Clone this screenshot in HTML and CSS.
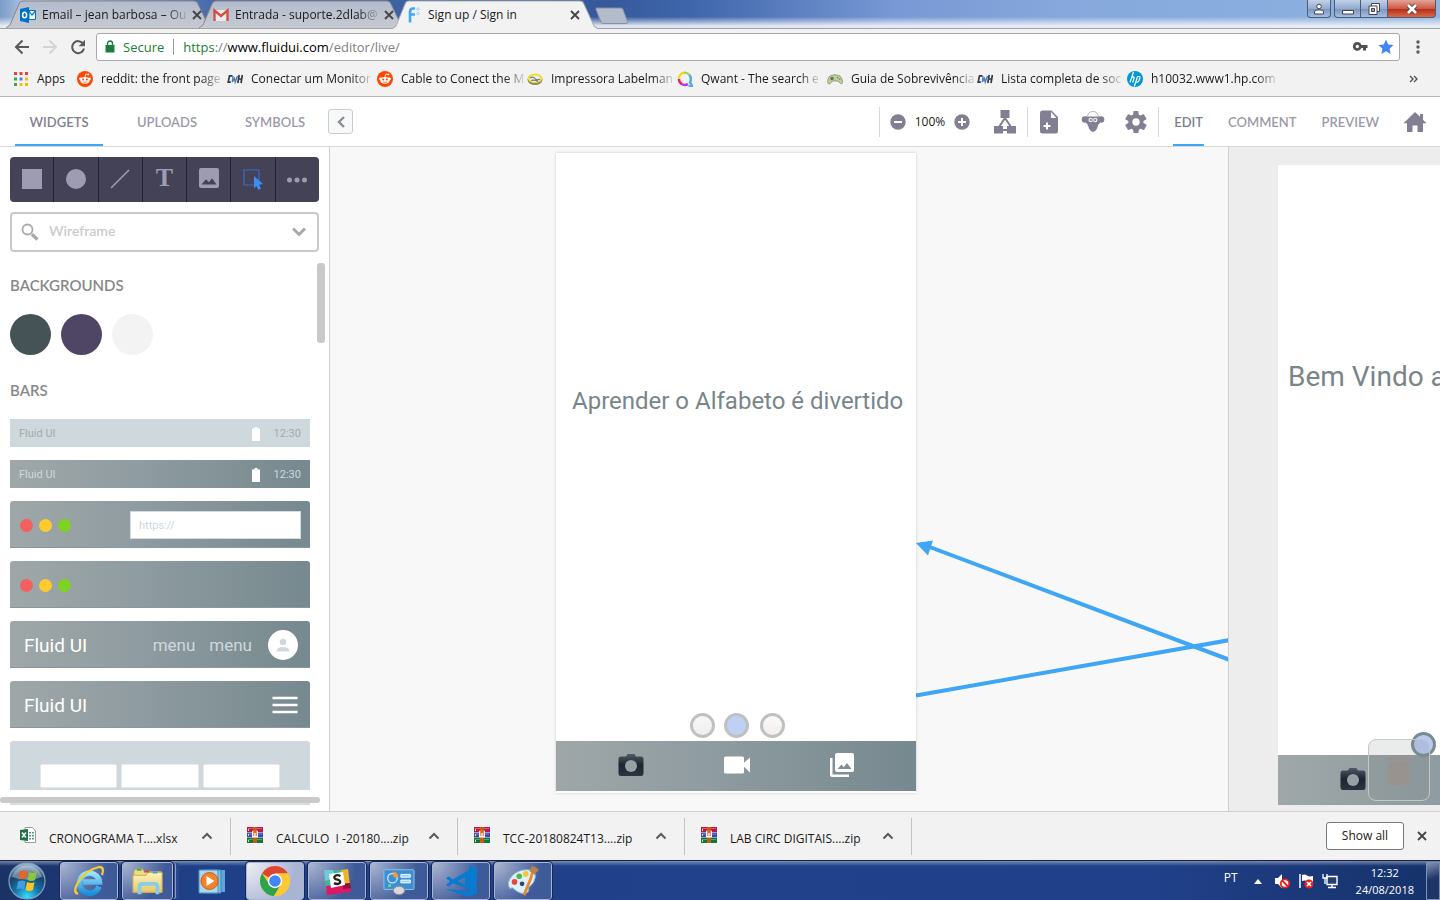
FILE: index.html
```html
<!DOCTYPE html>
<html lang="pt">
<head>
<meta charset="utf-8">
<title>Sign up / Sign in</title>
<link rel="stylesheet" href="styles.css">
</head>
<body>
<svg class="defs" aria-hidden="true">
  <defs>
    <linearGradient id="g-tab" x1="0" y1="0" x2="0" y2="1"><stop offset="0" stop-color="#b3bbcd"/><stop offset="1" stop-color="#c6cad1"/></linearGradient>
    <linearGradient id="g-ink" x1="0" y1="0" x2="0" y2="1"><stop offset="0" stop-color="#4e5a66"/><stop offset=".5" stop-color="#1c2530"/><stop offset="1" stop-color="#2b3440"/></linearGradient>
    <radialGradient id="g-orb" cx=".5" cy=".95" r=".9"><stop offset="0" stop-color="#35e0ff"/><stop offset=".4" stop-color="#1673a8"/><stop offset=".75" stop-color="#1c3f66"/><stop offset="1" stop-color="#8fb0cc"/></radialGradient>
    <linearGradient id="g-folder" x1="0" y1="0" x2="0" y2="1"><stop offset="0" stop-color="#fdf3bd"/><stop offset="1" stop-color="#e8c967"/></linearGradient>
    <linearGradient id="g-ie" x1="0" y1="0" x2="0" y2="1"><stop offset="0" stop-color="#9be4fb"/><stop offset="1" stop-color="#1c8fdc"/></linearGradient>
    <symbol id="tab" viewBox="0 0 206 28" preserveAspectRatio="none"><path d="M0 28L4 25 13 4Q14 1 17 1H188Q191 1 192 4L202 25 206 28"/></symbol>
    <symbol id="x" viewBox="0 0 10 10"><path d="M1 1l8 8M9 1L1 9" fill="none" stroke="currentColor" stroke-width="1.800"/></symbol>
    <symbol id="up" viewBox="0 0 12 8"><path d="M1.500 6.500L6 2l4.500 4.500" fill="none" stroke="currentColor" stroke-width="2"/></symbol>
    <symbol id="reddit" viewBox="0 0 16 16"><circle cx="8" cy="8" r="8" fill="#ff4500"/><circle cx="3.500" cy="7.800" r="1.400" fill="#fff"/><circle cx="12.500" cy="7.800" r="1.400" fill="#fff"/><ellipse cx="8" cy="9.300" rx="4.700" ry="3.400" fill="#fff"/><path d="M8 6l.8-3 2.400.5" fill="none" stroke="#fff" stroke-width=".8"/><circle cx="11.300" cy="3.600" r="1" fill="#fff"/><circle cx="6.200" cy="8.600" r="1" fill="#ff4500"/><circle cx="9.800" cy="8.600" r="1" fill="#ff4500"/><path d="M6 10.800q2 1.200 4 0" fill="none" stroke="#ff4500" stroke-width=".7"/></symbol>
    <symbol id="cwh" viewBox="0 0 16 16"><g fill="none" stroke="#333b44" stroke-width="1.700"><path d="M5.500 4.800H2.500L1.200 11.200h2.600"/><path d="M12.200 4L10.800 12M15.400 4L14 12M11.400 8h3.200"/></g><path d="M6 5l-.6 6 2-3.500.8 3.500 2.300-6" fill="none" stroke="#4d7fb8" stroke-width="1.400"/></symbol>
    <symbol id="rar" viewBox="0 0 16 16"><path fill="#b8174d" d="M0 0h16v5H0z"/><path fill="#3f48b0" d="M0 5.500h16v5H0z"/><path fill="#14753b" d="M0 11h16v5H0z"/><path fill="#e4527e" d="M1 1h14v1H1z"/><path fill="#7b84dd" d="M1 6.500h14v1H1z"/><path fill="#3fae6c" d="M1 12h14v1H1z"/><path fill="#f3d95a" d="M1 2h1v2H1zM1 7h1v2H1zM1 13h1v2H1z"/><path fill="#c85a12" d="M6 0h4v5H6zM6 11h4v5H6z"/><path fill="#e2611c" d="M5 3h6v8H5z"/><path fill="#fff" d="M5 4h1.300v5h1V6h1.400v3h1V4H11v6.500H5z"/></symbol>
    <symbol id="camera" viewBox="0 0 26 24"><path fill="url(#g-ink)" d="M8 3.500L9.500 1h7L18 3.500h5Q25.500 3.500 25.500 6v14.500Q25.500 23 23 23H3Q.5 23 .5 20.500V6Q.5 3.500 3 3.500z"/><circle cx="13" cy="13" r="6" fill="#96a0a3"/></symbol>
  </defs>
</svg>

<header class="titlebar">
  <div class="tabs">
    <div class="tab">
      <svg class="tab-shape"><use href="#tab"/></svg>
      <svg class="i16" viewBox="0 0 16 16"><path fill="#0072c6" d="M0 2l9-2v16l-9-2z"/><path fill="#fff" stroke="#0072c6" d="M9 3.500h6.500v9H9z"/><path d="M9 4l3 4 3.500-4" fill="none" stroke="#0072c6" stroke-width="1.200"/><ellipse cx="4.600" cy="8" rx="2" ry="2.800" fill="none" stroke="#fff" stroke-width="1.500"/></svg>
      <span class="tab-title fade">Email – jean barbosa – Ou</span>
      <button class="close" aria-label="Close tab"><svg><use href="#x"/></svg></button>
    </div>
    <div class="tab">
      <svg class="tab-shape"><use href="#tab"/></svg>
      <svg class="i16" viewBox="0 0 16 16"><path fill="#e8eaed" d="M1 3h14v11H1z"/><path d="M1.500 14V3.500L8 9l6.500-5.500V14" fill="none" stroke="#d54b3d" stroke-width="2.300"/></svg>
      <span class="tab-title fade">Entrada - suporte.2dlab@</span>
      <button class="close" aria-label="Close tab"><svg><use href="#x"/></svg></button>
    </div>
    <div class="tab active">
      <svg class="tab-shape"><use href="#tab"/></svg>
      <svg class="i16" viewBox="0 0 16 16"><path d="M9 1.500H7Q4 1.500 4 5v10.500M4 7.500h5" fill="none" stroke="#40a8f5" stroke-width="2.600"/><g fill="none" stroke="#8ccbf8" stroke-width=".8"><circle cx="12" cy="2" r="1.200"/><circle cx="12" cy="6.500" r="1.200"/></g></svg>
      <span class="tab-title">Sign up / Sign in</span>
      <button class="close" aria-label="Close tab"><svg><use href="#x"/></svg></button>
    </div>
    <button class="new-tab" aria-label="New tab"><svg viewBox="0 0 34 18"><path d="M2 1h24q1.500 0 2 1.500l4.500 12q.5 2-1.500 2H8q-1.500 0-2-1.500L1 2.500Q.5 1 2 1z" fill="#b4bccb" stroke="#8690a3"/></svg></button>
  </div>
  <div class="window-buttons">
    <button class="wb profile" aria-label="Profile"><svg viewBox="0 0 12 12"><circle cx="6" cy="3.500" r="2.300" fill="#fff" stroke="#445"/><path d="M1.500 11V9q0-2 2.500-2h4q2.500 0 2.500 2v2z" fill="#fff" stroke="#445"/></svg></button>
    <div class="wb-group">
      <button class="wb" aria-label="Minimize"><svg viewBox="0 0 12 12"><path fill="#fff" stroke="#445" d="M.5 7.500h11v3.500H.5z"/></svg></button>
      <button class="wb" aria-label="Restore"><svg viewBox="0 0 12 12"><path fill="#fff" stroke="#445" d="M3.500.5h8v8h-8z"/><path fill="#fff" stroke="#445" d="M1 3h8v8.500H1z"/><path fill="#8aa" stroke="#445" d="M3.500 5.500h3v3h-3z"/></svg></button>
      <button class="wb red" aria-label="Close"><svg viewBox="0 0 12 12"><path d="M2 2l8 8M10 2l-8 8" stroke="#533" stroke-width="4.500"/><path d="M2 2l8 8M10 2l-8 8" stroke="#fff" stroke-width="2.800"/></svg></button>
    </div>
  </div>
</header>

<div class="toolbar">
  <button class="nav" aria-label="Back"><svg viewBox="0 0 16 16"><path d="M15 8H2.500M8.500 1.500L2 8l6.500 6.500" fill="none" stroke="#5a5a5a" stroke-width="2"/></svg></button>
  <button class="nav" aria-label="Forward"><svg viewBox="0 0 16 16"><path d="M1 8h12.500M7.500 1.500L14 8l-6.500 6.500" fill="none" stroke="#d4d4d4" stroke-width="2"/></svg></button>
  <button class="nav" aria-label="Reload"><svg viewBox="0 0 16 16"><path d="M13.300 5A6 6 0 1 0 14 9.500" fill="none" stroke="#5a5a5a" stroke-width="2"/><path d="M15 .8v6.400H8.600z" fill="#5a5a5a"/></svg></button>
  <div class="omnibox">
    <svg class="lock" viewBox="0 0 10 13"><path fill="#188038" d="M.5 5h9v7.500h-9z"/><path d="M2.500 5.500V3.500a2.500 2.500 0 0 1 5 0v2" fill="none" stroke="#188038" stroke-width="1.400"/></svg>
    <span class="secure">Secure</span>
    <span class="url"><span class="scheme">https</span><span class="dim">://</span>www.fluidui.com<span class="dim">/editor/live/</span></span>
    <svg class="key" viewBox="0 0 15 9"><path fill="#505050" fill-rule="evenodd" d="M4.300 0a4.500 4.500 0 0 1 4.100 3H14.500v3H13v2.500h-3V6H8.400A4.400 4.400 0 1 1 4.300 0zm0 2.800a1.700 1.700 0 1 0 0 3.400 1.700 1.700 0 0 0 0-3.400z"/></svg>
    <svg class="i16" viewBox="0 0 16 16"><path fill="#4285f4" d="M8 .5l2.200 5 5.300.6-4 3.600 1.200 5.400L8 12.300l-4.700 2.800 1.200-5.400-4-3.600 5.300-.6z"/></svg>
  </div>
  <button class="kebab" aria-label="Menu"><svg viewBox="0 0 4 14"><g fill="#5a5a5a"><circle cx="2" cy="2" r="1.700"/><circle cx="2" cy="7" r="1.700"/><circle cx="2" cy="12" r="1.700"/></g></svg></button>
</div>

<nav class="bookmarks">
  <a class="apps" href="#"><svg class="i16" viewBox="0 0 16 16"><path fill="#ea4335" d="M1 1h3v3H1zM6.500 1h3v3h-3zM12 1h3v3h-3z"/><path fill="#34a853" d="M1 6.500h3v3H1zM1 12h3v3H1z"/><path fill="#4285f4" d="M6.500 6.500h3v3h-3z"/><path fill="#fbbc05" d="M12 6.500h3v3h-3zM6.500 12h3v3h-3zM12 12h3v3h-3z"/></svg><span>Apps</span></a>
  <a href="#"><svg class="i16"><use href="#reddit"/></svg><span class="fade">reddit: the front page</span></a>
  <a href="#"><svg class="i16"><use href="#cwh"/></svg><span class="fade">Conectar um Monitor</span></a>
  <a href="#"><svg class="i16"><use href="#reddit"/></svg><span class="fade">Cable to Conect the M</span></a>
  <a href="#"><svg class="i16" viewBox="0 0 16 16"><ellipse cx="8" cy="8.500" rx="7.500" ry="5.500" fill="#8d8a5a"/><ellipse cx="8" cy="7.300" rx="7.300" ry="4.800" fill="#f1e12f"/><ellipse cx="8" cy="7.800" rx="5.500" ry="3.200" fill="#eee"/><path d="M3 7q3-2 5 .5t5 .5M4 9.500q3-1 7 1" fill="none" stroke="#777" stroke-width="1.200"/></svg><span class="fade">Impressora Labelman</span></a>
  <a href="#"><svg class="i16" viewBox="0 0 16 16" fill="none" stroke-width="2.400"><path d="M2 8a6 6 0 0 1 5-6.300" stroke="#fdd41a"/><path d="M7 1.700A6 6 0 0 1 12.500 4" stroke="#a4d64c"/><path d="M12.500 4Q15 8 13 11.500l2.500 4h-4" stroke="#4fa8e8"/><path d="M11 13a6 6 0 0 1-7-.5" stroke="#c02ee0"/><path d="M4.500 13A6 6 0 0 1 2 8" stroke="#f0254e"/></svg><span class="fade">Qwant - The search e</span></a>
  <a href="#"><svg class="i16" viewBox="0 0 16 16"><path d="M4 4.500q4-1.500 8 0 3 1 3.500 7-.5 2-2 1L11 10H5.500L3 12.800q-2 .6-2.400-1.300Q.8 5.500 4 4.500z" fill="#bcd09e" stroke="#84926d" stroke-width=".8"/><circle cx="5" cy="7.500" r="1.800" fill="#697258"/><path d="M10 6h1.300v1.300H10zM12 7.500h1.300v1.300H12z" fill="#77815f"/></svg><span class="fade">Guia de Sobrevivência</span></a>
  <a href="#"><svg class="i16"><use href="#cwh"/></svg><span class="fade">Lista completa de soc</span></a>
  <a href="#"><svg class="i16" viewBox="0 0 16 16"><circle cx="8" cy="8" r="8" fill="#0096d6"/><path d="M6.500 1L3 11.500M4.800 6.500q3-1.500 2.200.8L5.700 11.500M7.300 15.500L10.500 5.500h1.800q1 0 .6 1.300l-1 3q-.4 1.300-1.500 1.300H8.800" fill="none" stroke="#fff" stroke-width="1.200"/></svg><span class="fade">h10032.www1.hp.com</span></a>
  <button class="more" aria-label="More bookmarks"><svg viewBox="0 0 9 8"><path d="M1 1l3 3-3 3M5 1l3 3-3 3" fill="none" stroke="#555" stroke-width="1.400"/></svg></button>
</nav>

<div class="app-header">
  <div class="side-tabs">
    <button class="htab current">WIDGETS</button>
    <button class="htab">UPLOADS</button>
    <button class="htab">SYMBOLS</button>
  </div>
  <button class="collapse" aria-label="Collapse panel"><svg viewBox="0 0 8 12"><path d="M7 1L2 6l5 5" fill="none" stroke="#8d8d8d" stroke-width="2.400"/></svg></button>
  <div class="header-right">
    <div class="group zoom">
      <button aria-label="Zoom out"><svg viewBox="0 0 16 16"><circle cx="8" cy="8" r="7.700" fill="#817f91"/><path stroke="#fff" stroke-width="2" d="M4 8h8"/></svg></button>
      <span>100%</span>
      <button aria-label="Zoom in"><svg viewBox="0 0 16 16"><circle cx="8" cy="8" r="7.700" fill="#817f91"/><path stroke="#fff" stroke-width="2" d="M4 8h8M8 4v8"/></svg></button>
      <button class="big map" aria-label="Site map"><svg viewBox="0 0 24 24"><path fill="#817f91" d="M7.500 0h9v8h-9zM1 16h9v7.500H1zM14 16h9v7.500h-9z"/><path d="M12 8L6 17M12 8l6 9M6 20h12" fill="none" stroke="#817f91" stroke-width="2"/></svg></button>
    </div>
    <div class="group tools">
      <button class="big" aria-label="New page"><svg viewBox="0 0 24 24"><path fill="#817f91" fill-rule="evenodd" d="M5 .5h9.500L21 7v14q0 2.500-2.500 2.500h-13Q3 23.500 3 21V3Q3 .5 5 .5zM14 2v6h5.500z"/><path stroke="#fff" stroke-width="2" d="M6.500 16h7M10 12.500v7"/></svg></button>
      <button class="big" aria-label="Account"><svg viewBox="0 0 24 24"><path d="M6.500 6Q7.500 1.500 12 1.500T17.500 6" fill="none" stroke="#b9b8c1"/><circle cx="4" cy="9.500" r="3.300" fill="#817f91"/><circle cx="20" cy="9.500" r="3.300" fill="#817f91"/><path fill="#817f91" d="M5 6.500h14V13q-2 1-2.500 4-1 4-4.500 5-3.500-1-4.500-5Q7 14 5 13z"/><circle cx="9.700" cy="10" r="2.200" fill="#eee"/><circle cx="14.300" cy="10" r="2.200" fill="#eee"/><circle cx="9.900" cy="10" r="1.100" fill="#817f91"/><circle cx="14.100" cy="10" r="1.100" fill="#817f91"/></svg></button>
      <button class="big" aria-label="Settings"><svg viewBox="1 1 22 22"><path fill="#817f91" d="M19.430 12.980c.04-.32.070-.64.070-.98s-.03-.66-.07-.98l2.910-1.650c.19-.15.240-.42.120-.64l-2.500-4.330c-.12-.22-.39-.3-.61-.22l-2.990 1.200c-.52-.4-1.080-.73-1.690-.98l-.38-3.050A.49.49 0 0 0 14 1h-4c-.25 0-.46.180-.49.420l-.38 3.050c-.61.250-1.170.59-1.690.980l-2.990-1.200c-.23-.09-.49 0-.61.220l-2.500 4.330c-.13.220-.07.490.12.640l2.910 1.650c-.04.320-.07.650-.07.980s.03.660.07.980l-2.910 1.650c-.19.150-.24.420-.12.640l2.500 4.330c.12.220.39.300.61.220l2.990-1.200c.52.400 1.080.73 1.690.98l.38 3.050c.03.240.24.420.49.420h4c.25 0 .46-.18.490-.42l.38-3.050c.61-.25 1.170-.59 1.690-.98l2.990 1.200c.23.090.49 0 .61-.22l2.500-4.330c.12-.22.070-.49-.12-.64zM12 15.700a3.700 3.700 0 1 1 0-7.400 3.700 3.700 0 0 1 0 7.400z"/></svg></button>
    </div>
    <div class="group modes">
      <button class="htab mode current">EDIT</button>
      <button class="htab mode">COMMENT</button>
      <button class="htab mode">PREVIEW</button>
      <button class="big home" aria-label="Home"><svg viewBox="0 0 24 24"><path fill="#817f91" d="M12 2L.5 13.200H4V22h5.500v-6.500h5V22H20v-8.800h3.500L20 9.700V4h-3v2.800z"/></svg></button>
    </div>
  </div>
</div>

<main class="workspace">
  <aside class="sidebar">
    <div class="shape-tools">
      <button aria-label="Rectangle"><svg viewBox="0 0 24 24"><path fill="#9d9cb3" d="M2 1h20v20H2z"/></svg></button>
      <button aria-label="Ellipse"><svg viewBox="0 0 24 24"><circle cx="12" cy="11" r="10" fill="#9d9cb3"/></svg></button>
      <button aria-label="Line"><svg viewBox="0 0 24 24"><path stroke="#9d9cb3" stroke-width="1.600" d="M3 20L21 2"/></svg></button>
      <button aria-label="Text" class="type">T</button>
      <button aria-label="Image"><svg viewBox="0 0 24 24"><path fill="#9d9cb3" fill-rule="evenodd" d="M4 0h16q2 0 2 2v16q0 2-2 2H4q-2 0-2-2V2q0-2 2-2zm.5 16.500h15L15 10.300l-3 4-3-3z"/></svg></button>
      <button aria-label="Select"><svg viewBox="0 0 24 24"><path d="M3 2h15v15H3z" fill="none" stroke="#3f69c8" stroke-width="1.200"/><path fill="#3f8cf5" d="M13 8l9 8-4 .8 2.200 3.700-2.800 1.500-2-4-2.400 2.500z"/></svg></button>
      <button aria-label="More"><svg viewBox="0 0 24 24"><g fill="#9d9cb3"><circle cx="4.500" cy="12" r="2.500"/><circle cx="12" cy="12" r="2.500"/><circle cx="19.500" cy="12" r="2.500"/></g></svg></button>
    </div>
    <label class="search">
      <svg viewBox="0 0 18 18"><circle cx="6.500" cy="6.500" r="5" fill="none" stroke="#a9a9a9" stroke-width="1.800"/><path stroke="#a9a9a9" stroke-width="3.400" d="M10.800 11.300l5.700 5.200"/></svg>
      <input type="text" placeholder="Wireframe" aria-label="Search widgets">
      <svg class="drop" viewBox="0 0 14 10"><path d="M1 1.500l6 6 6-6" fill="none" stroke="#a9a9a9" stroke-width="3"/></svg>
    </label>
    <div class="library">
      <h2>BACKGROUNDS</h2>
      <div class="swatches"><button class="slate" aria-label="Slate"></button><button class="purple" aria-label="Purple"></button><button class="light" aria-label="Light"></button></div>
      <h2>BARS</h2>
      <div class="bars">
        <div class="bar status pale"><span>Fluid UI</span><svg viewBox="0 0 8 14"><path fill="#fff" d="M2.500 0h3v1.500H8V14H0V1.500h2.500z"/></svg><span>12:30</span></div>
        <div class="bar status"><span>Fluid UI</span><svg viewBox="0 0 8 14"><path fill="#fff" d="M2.500 0h3v1.500H8V14H0V1.500h2.500z"/></svg><span>12:30</span></div>
        <div class="bar tall"><i class="dot r"></i><i class="dot y"></i><i class="dot g"></i><span class="address">https://</span></div>
        <div class="bar tall"><i class="dot r"></i><i class="dot y"></i><i class="dot g"></i></div>
        <div class="bar tall title"><b>Fluid UI</b><span>menu</span><span>menu</span><svg class="avatar" viewBox="0 0 30 30"><circle cx="15" cy="15" r="15" fill="#fff"/><circle cx="15" cy="12" r="3.200" fill="#cfd8dd"/><path fill="#cfd8dd" d="M8.500 21.500q0-4.500 6.500-4.500t6.500 4.500z"/></svg></div>
        <div class="bar tall title"><b>Fluid UI</b><svg class="burger" viewBox="0 0 25 18"><path stroke="#fff" stroke-width="2.400" d="M0 2h25M0 9h25M0 16h25"/></svg></div>
        <div class="bar pale sheet"><i></i><i></i><i></i></div>
      </div>
    </div>
    <div class="vscroll"></div>
    <div class="hscroll"></div>
  </aside>

  <section class="canvas">
    <svg class="links"><g fill="none" stroke="#3fa6f5" stroke-width="4"><path d="M597 399L900 513"/><path d="M586 548.500L900 493"/></g><path fill="#3fa6f5" d="M586 396l17-2.500-5 15z"/></svg>
    <article class="screen">
      <p>Aprender o Alfabeto é divertido</p>
      <div class="pager"><i></i><i class="on"></i><i class="last"></i></div>
      <div class="dock">
        <svg><use href="#camera"/></svg>
        <svg viewBox="0 0 26 24"><path fill="#fff" d="M1.500 3.500h17q1.500 0 1.500 1.500v4.700L26 4.500v15l-6-5.700V19q0 1.500-1.500 1.500h-17Q0 20.500 0 19V5q0-1.500 1.500-1.500z"/></svg>
        <svg viewBox="0 0 24 24"><path fill="#fff" fill-rule="evenodd" d="M7 0h15q2 0 2 2v15q0 2-2 2H7q-2 0-2-2V2q0-2 2-2zm.5 16h14l-4.500-6-3.300 4.200-2.200-2.700zM0 5h2.500v16.500H19V24H2q-2 0-2-2z"/></svg>
      </div>
    </article>
  </section>

  <section class="next-pane">
    <article class="screen next">
      <p>Bem Vindo ao</p>
      <div class="dock"><svg><use href="#camera"/></svg></div>
    </article>
    <i class="knob"></i>
    <button class="trash" aria-label="Delete"><svg viewBox="0 0 24 30"><path fill="#98938e" d="M8 0h8l1.500 2H24v3H0V2h6.500zM1.500 7h21v21q0 2-2 2h-17q-2 0-2-2z"/></svg></button>
  </section>
</main>

<footer class="downloads">
  <div class="download"><svg class="i16" viewBox="0 0 16 16"><path fill="#fff" stroke="#9a9a9a" d="M5 .5h7.500L15.500 4v11.500H5z"/><path fill="#4f9e75" d="M9 5h2v1.500H9zM12 5h2v1.500h-2zM9 8h2v1.500H9zM12 8h2v1.500h-2zM9 11h2v1.500H9zM12 11h2v1.500h-2z"/><path fill="#1e7145" d="M0 3l8-1v12l-8-1z"/><path stroke="#fff" stroke-width="1.500" d="M2 5.500l4 5M6 5.500l-4 5"/></svg><span>CRONOGRAMA T....xlsx</span><button aria-label="Options"><svg><use href="#up"/></svg></button></div>
  <div class="download"><svg class="i16"><use href="#rar"/></svg><span>CALCULO&nbsp; I -20180....zip</span><button aria-label="Options"><svg><use href="#up"/></svg></button></div>
  <div class="download"><svg class="i16"><use href="#rar"/></svg><span>TCC-20180824T13....zip</span><button aria-label="Options"><svg><use href="#up"/></svg></button></div>
  <div class="download"><svg class="i16"><use href="#rar"/></svg><span>LAB CIRC DIGITAIS....zip</span><button aria-label="Options"><svg><use href="#up"/></svg></button></div>
  <button class="show-all">Show all</button>
  <button class="close" aria-label="Close downloads"><svg><use href="#x"/></svg></button>
</footer>

<div class="taskbar">
  <button class="start" aria-label="Start"><svg viewBox="0 0 38 38"><circle cx="19" cy="19" r="18" fill="url(#g-orb)" stroke="#7fa3bf" stroke-width="1.200"/><path fill="#fff" opacity=".35" d="M4 15a15.500 15.500 0 0 1 30 0q-15 5-30 0z"/><path fill="#e8632a" d="M12 9.500q4-2 7.500 0L18 17.500q-3.500-2-7.500 0z"/><path fill="#8cc63e" d="M21 10q4 2 8-.5L27 18q-3.500 2-7.500 0z"/><path fill="#3f9de0" d="M10 19.500q4-2 7.500 0L16 27.500q-4-2-7.500 0z"/><path fill="#fcc520" d="M19 20q4 2 7.500.3L25 28q-4 2-7.500 0z"/></svg></button>
  <button class="task" aria-label="Internet Explorer"><svg viewBox="0 0 32 32"><path d="M26 21.500A10 10 0 1 1 26.500 17H10" fill="none" stroke="url(#g-ie)" stroke-width="5.500"/><path d="M5 29Q-1 27 6 16T26 2q6 0 3 8" fill="none" stroke="#f6cc2e" stroke-width="2.300"/></svg></button>
  <button class="task stack" aria-label="Explorer"><svg viewBox="0 0 34 32"><path fill="#f0d987" stroke="#c4a04a" d="M2 6l2-3h7l2 3h18v22H2z"/><path fill="url(#g-folder)" stroke="#cfae58" d="M1 10h14l2-3h15v21H1z"/><path fill="#35a853" d="M5 3h5v2H5z"/><path fill="#d43" d="M13 5h5v2h-5z"/><path fill="#3aa0e8" d="M22 6h5v2h-5z"/><path d="M8 30v-8q0-3 3-3h13q3 0 3 3v8" fill="none" stroke="#86cdec" stroke-width="4"/></svg></button>
  <button class="task plain" aria-label="Media Player"><svg viewBox="0 0 32 32"><path fill="#5aa7d8" d="M10 5h19v22H10z"/><path fill="#7fc0e6" stroke="#4187b5" d="M7 5h18v23H7z"/><path fill="#a9d8f0" stroke="#4b90bd" d="M3 5h19v23H3z"/><circle cx="13.500" cy="16" r="8.500" fill="#f4832a" stroke="#d35c10"/><path fill="#fff" d="M10.500 11l8 5-8 5z"/></svg></button>
  <button class="task lit" aria-label="Chrome"><svg viewBox="0 0 32 32"><circle cx="16" cy="16" r="15" fill="#fcc934"/><path fill="#db4437" d="M16 16L3 8.500A15 15 0 0 1 29 8.500H16z"/><path fill="#2ba24c" d="M3 8.500A15 15 0 0 0 15 31l7-12-12 0z"/><path fill="#fcc934" d="M15 31l7.500-12L16 8.500h13A15 15 0 0 1 15 31z"/><circle cx="16" cy="16" r="7.200" fill="#fff"/><circle cx="16" cy="16" r="5.800" fill="#4285f4"/></svg></button>
  <button class="task" aria-label="Slack"><svg viewBox="0 0 32 32"><path fill="#3eb991" d="M3 5h20v20H5z"/><path fill="#70c9dd" d="M3 5h9l2 8-10 3z"/><path fill="#ecb32d" d="M20 5l7-1 2 16-6 2z"/><path fill="#e01765" d="M5 21l24-3 1 9-24 3z"/><path fill="#8a1538" d="M22 19l7-1 1 5-8 1z"/><path fill="#fff" d="M8 9l14-2 2 13-14 3z"/><path d="M19.500 11Q15.500 9.200 13.500 11.500q-1 2.500 3 3.200 3.500.8 2.500 3.100-2 2.300-6 .3" fill="none" stroke="#222" stroke-width="2.300"/></svg></button>
  <button class="task" aria-label="Control Panel"><svg viewBox="0 0 34 32"><rect x="1" y="4" width="32" height="21" rx="1" fill="#3c8fd2" stroke="#8cc5ee"/><circle cx="10" cy="13" r="5" fill="none" stroke="#c6e6fa" stroke-width="1.500"/><path fill="#f79b2c" d="M11 12V6a6 6 0 0 1 5.500 6z"/><path fill="#9fd4f6" stroke="#fff" d="M19 9h10v3H19zM19 15h10v3H19z"/><circle cx="7" cy="21" r="1.500" fill="#7fe070"/><ellipse cx="17" cy="26" rx="6" ry="4.500" fill="#d8d8d8" stroke="#888"/></svg></button>
  <button class="task" aria-label="Code"><svg viewBox="0 0 32 32"><path fill="#0a7ad0" fill-rule="evenodd" d="M24 0l8 3v25l-8 4L0 24l24 2zM24 5L8 14.500 4 11.500 1 13l4 3.500L1 20l3 1.500L8 18.500 24 24zm-4 7v8l-7-4z"/></svg></button>
  <button class="task" aria-label="Paint"><svg viewBox="0 0 34 32"><path fill="#dff0fa" stroke="#84b6d6" d="M3 24Q-1 18 5 11T21 4q10 0 9 8-1 6-5 9-3 2-2 5-1 4-8 3-5-2-7-4-2-3-5-1z"/><circle cx="8" cy="17" r="3" fill="#e2483d"/><circle cx="13" cy="11" r="3" fill="#52b848"/><circle cx="20" cy="8.500" r="3" fill="#f7c52c"/><circle cx="16" cy="19" r="2.500" fill="#214b83"/><path stroke="#e98a2c" fill="none" stroke-width="3" d="M18 31l7-17 2-7"/><path fill="#b98248" d="M24 6L26 0l4 1 4 3-5 5z"/></svg></button>
  <div class="tray">
    <span class="lang">PT</span>
    <svg class="arrow" viewBox="0 0 8 5"><path fill="#fff" d="M4 0l4 5H0z"/></svg>
    <svg viewBox="0 0 16 16"><path fill="#fff" d="M1 5h3l4-4v14l-4-4H1z"/><circle cx="11" cy="10.500" r="4.200" fill="#fff" stroke="#e0251c" stroke-width="1.800"/><path stroke="#e0251c" stroke-width="1.800" d="M8 7.500l6 6"/></svg>
    <svg viewBox="0 0 16 16"><path stroke="#fff" stroke-width="1.500" d="M2 1v14"/><path fill="#fff" d="M4 2q3-1 5 .5t6 .5v6q-4 0-6-1T4 8z"/><circle cx="11" cy="11" r="4.500" fill="#e0251c"/><path stroke="#fff" stroke-width="1.600" d="M9 9l4 4M13 9l-4 4"/></svg>
    <svg viewBox="0 0 16 16"><path d="M5 3.500h10v8H5zM10 11.500v3M6 14.500h8" fill="#24406f" stroke="#fff" stroke-width="1.400"/><path d="M1 1v4h4V1M3 5v6" fill="none" stroke="#fff" stroke-width="1.300"/></svg>
    <time class="clock"><span>12:32</span><span>24/08/2018</span></time>
    <button class="desktop" aria-label="Show desktop"></button>
  </div>
</div>
</body>
</html>
```

FILE: styles.css
```css
* { box-sizing: border-box; }
html, body { height: 100%; }
body {
  margin: 0;
  display: flex;
  flex-direction: column;
  overflow: hidden;
  font: 12px/16px "Open Sans", "Noto Sans", sans-serif;
  color: #1a1a1a;
  background: #f2f2f2;
}
button { margin: 0; padding: 0; border: 0; background: none; font: inherit; color: inherit; cursor: pointer; }
a { color: inherit; text-decoration: none; }
svg { display: block; flex: none; }
.defs { position: absolute; width: 0; height: 0; }
.i16 { width: 16px; height: 16px; }
.fade {
  white-space: nowrap;
  -webkit-mask-image: linear-gradient(90deg, #000 calc(100% - 20px), rgba(0, 0, 0, .15));
  mask-image: linear-gradient(90deg, #000 calc(100% - 20px), rgba(0, 0, 0, .15));
}

/* Title bar */
.titlebar {
  flex: none;
  height: 29px;
  display: flex;
  justify-content: space-between;
  border-bottom: 1px solid #a0a4aa;
  background:
    linear-gradient(180deg, transparent 60%, rgba(240, 243, 248, .9) 92%),
    linear-gradient(90deg, #7b9bc8 0, #b9cbe4 2%, #4568a8 15%, #36599c 42%, #3f66ab 48%, #7798d4 62%, #86a8dc 74%, #8aafdf 90%, #93b4dc 100%);
}
.tabs { display: flex; padding-left: 6px; height: 29px; position: relative; }
.tab {
  position: relative;
  width: 206px;
  margin-right: -13px;
  padding: 0 18px 0 14px;
  display: flex;
  align-items: center;
  gap: 6px;
}
.tab-shape { position: absolute; left: 0; top: 0; width: 100%; height: 28px; fill: url(#g-tab); stroke: #85878c; }
.tab.active { z-index: 1; }
.tab.active .tab-shape { height: 29px; fill: #f2f2f2; stroke: #a8abb0; }
.tab .i16, .tab-title, .tab .close { position: relative; }
.tab .close { margin-left: auto; }
.close svg { width: 10px; height: 10px; color: #444; }
.new-tab { margin: 2px 0 0 10px; }
.new-tab svg { width: 34px; height: 18px; }
.window-buttons { display: flex; gap: 3px; padding-right: 4px; }
.wb-group { display: flex; }
.wb {
  width: 27px;
  height: 18px;
  display: flex;
  align-items: center;
  justify-content: center;
  border: 1px solid #4a5c78;
  border-top: 0;
  background: linear-gradient(#c3d2e8, #93acd0 50%, #7893bd 51%, #a6bfdf);
}
.wb svg { width: 12px; height: 12px; }
.wb.profile { width: 24px; border-radius: 0 0 4px 4px; }
.wb-group .wb + .wb { border-left: 0; }
.wb-group .wb:first-child { border-radius: 0 0 0 4px; }
.wb.red { width: 48px; border-radius: 0 0 4px 0; background: linear-gradient(#e3a596, #cf5a44 50%, #b42a14 51%, #d9694c); }

/* Address bar */
.toolbar { flex: none; height: 33px; display: flex; align-items: center; padding: 2px 20px 0 14px; }
.nav { width: 28px; height: 28px; }
.nav svg { width: 16px; height: 16px; }
.nav:nth-child(3) { width: 26px; }
.omnibox {
  flex: 1;
  height: 28px;
  display: flex;
  align-items: center;
  padding: 0 5px 0 8px;
  background: #fff;
  border: 1px solid #a9a9a9;
  border-radius: 3px;
  font-size: 13px;
  line-height: 18px;
}
.lock { width: 10px; height: 13px; margin-right: 8px; }
.secure { color: #188038; padding-right: 9px; border-right: 1px solid #9b9b9b; line-height: 16px; }
.url { flex: 1; padding-left: 9px; color: #000; }
.scheme { color: #188038; }
.dim { color: #808080; }
.key { width: 15px; height: 9px; margin-right: 10px; }
.kebab { margin-left: 16px; }
.kebab svg { width: 4px; height: 14px; }

/* Bookmarks */
.bookmarks { flex: none; height: 35px; display: flex; align-items: center; padding: 0 22px 0 13px; border-bottom: 1px solid #b6b4b6; }
.bookmarks a { width: 150px; display: flex; align-items: center; gap: 8px; }
.bookmarks a.apps { width: 64px; }
.more { margin-left: auto; }
.more svg { width: 9px; height: 8px; }

/* Editor header */
.app-header { flex: none; height: 50px; display: flex; align-items: center; background: #fff; border-bottom: 1px solid #d8d8d8; }
.side-tabs { display: flex; gap: 20px; margin: 0 9px 0 15px; align-self: stretch; }
.htab { width: 88px; border-bottom: 2px solid transparent; padding-top: 2px; font: 600 13px/18px Lato, sans-serif; color: #9c9aa9; }
.htab.current { color: #817f91; border-color: #3fa6f5; }
.collapse { width: 25px; height: 25px; display: flex; align-items: center; justify-content: center; background: #f7f8f9; border: 1px solid #ccc; border-radius: 3px; }
.collapse svg { width: 8px; height: 12px; }
.header-right { margin-left: auto; display: flex; align-items: center; align-self: stretch; }
.group { height: 30px; display: flex; align-items: center; border-left: 1px solid #d8d8d8; }
.group button svg { width: 16px; height: 16px; }
.group .big svg { width: 24px; height: 24px; }
.zoom { gap: 9px; padding: 0 10px; }
.map { margin-left: 14px; }
.tools { gap: 20px; padding: 0 11px 0 9px; }
.group.tools .big:last-child svg { width: 22px; height: 22px; }
.modes { height: 49px; gap: 23px; padding: 0 13px 0 15px; border: 0; position: relative; }
.modes::before { content: ""; position: absolute; left: 0; top: 10px; height: 30px; border-left: 1px solid #d8d8d8; }
.modes .mode { width: auto; height: 49px; padding-left: 1px; padding-right: 1px; }

/* Sidebar */
.workspace { flex: 1; min-height: 0; display: flex; background: #f8f8f8; border-bottom: 1px solid #d0d0d0; }
.sidebar { position: relative; flex: none; width: 330px; padding: 10px 10px 0; display: flex; flex-direction: column; background: #fff; border-right: 1px solid #d0d0d0; overflow: hidden; }
.shape-tools { flex: none; height: 45px; display: flex; background: #434257; border-radius: 4px; overflow: hidden; }
.shape-tools button { flex: 1; display: flex; align-items: center; justify-content: center; }
.shape-tools button + button { border-left: 1px solid #222131; }
.shape-tools svg { width: 24px; height: 24px; }
.shape-tools .type { padding-bottom: 3px; font: 700 26px/28px "Liberation Serif", serif; color: #9d9cb3; }
.search { flex: none; height: 40px; margin-top: 10px; display: flex; align-items: center; gap: 10px; padding: 0 11px 0 9px; border: 2px solid #c9c9c9; border-radius: 4px; }
.search svg { width: 18px; height: 18px; }
.search .drop { width: 14px; height: 10px; }
.search input { flex: 1; min-width: 0; padding: 0 0 2px; border: 0; outline: 0; background: none; font: 600 14px/20px Lato, sans-serif; color: #888; }
.search input::placeholder { color: #cbcbcb; opacity: 1; }
.library { flex: 1; min-height: 0; overflow: hidden; width: 300px; margin: 11px 0 5px; }
.library h2 { margin: 12px 0 19px; font: 600 15px/20px Lato, sans-serif; color: #888; }
.swatches { display: flex; gap: 10px; margin-bottom: 25px; }
.swatches button { width: 41px; height: 41px; border-radius: 50%; }
.swatches .slate { background: #455356; }
.swatches .purple { background: #4f4565; }
.swatches .light { background: #f3f3f3; }
.bars { display: flex; flex-direction: column; gap: 13px; }
.bar { display: flex; align-items: center; background: linear-gradient(90deg, #9fa7a8, #8f9ca1 42%, #76898e); color: #cfd8dd; font-family: Roboto, sans-serif; }
.bar.pale { background: #cfd8dd; color: #a3abac; }
.status { height: 28px; padding: 2px 9px 0; font-size: 11px; }
.status span:first-child { flex: 1; }
.status svg { width: 8px; height: 14px; margin-right: 14px; }
.tall { height: 47px; padding: 2px 9px 0 10px; border-radius: 3px 3px 0 0; border-bottom: 1px solid #8b979d; }
.dot { width: 13px; height: 13px; margin-right: 6px; border-radius: 50%; }
.r { background: #f55f5f; }
.y { background: #fecb2e; }
.g { background: #7ed321; }
.address { width: 171px; margin-left: auto; padding: 6px 8px 4px; background: #fff; border: 1px solid #d4dbdd; font-size: 11px; line-height: 16px; }
.title { padding: 1px 12px 0 14px; font-size: 17px; line-height: 20px; gap: 14px; }
.title span { padding-top: 1px; }
.title span:nth-last-child(2) { margin-right: 2px; }
.title b { flex: 1; padding-top: 2px; font-weight: 400; font-size: 19px; color: #fff; }
.avatar { width: 30px; height: 30px; }
.burger { width: 26px; height: 18px; }
.sheet { height: 64px; padding: 23px 30px 17px; gap: 4px; align-items: stretch; border-radius: 3px 3px 0 0; }
.sheet i { flex: 1; background: #fff; border: 1px solid #e6eaed; border-radius: 2px; }
.vscroll { position: absolute; right: 4px; top: 116px; width: 8px; height: 80px; border-radius: 3px; background: #c9c9c9; }
.hscroll { position: absolute; left: 0; right: 0; bottom: 0; height: 21px; background: #fff; }
.hscroll::before { content: ""; position: absolute; left: 0; right: 9px; top: 7px; height: 6px; border-radius: 3px; background: #c9c9c9; }
.hscroll::after { content: ""; position: absolute; left: 10px; width: 300px; top: 13px; height: 2px; background: #d7dee2; }

/* Canvas */
.canvas { position: relative; flex: 1; overflow: hidden; }
.links { position: absolute; inset: 0; width: 100%; height: 100%; }
.screen { position: absolute; left: 226px; top: 6px; width: 360px; height: 640px; background: #fff; box-shadow: 0 0 3px rgba(0, 0, 0, .18); font-family: Roboto, sans-serif; color: #78868a; }
.screen p { position: absolute; left: 16px; top: 232px; margin: 0; font-size: 24px; line-height: 32px; white-space: nowrap; }
.pager { position: absolute; left: 134px; top: 560px; display: flex; gap: 9px; }
.pager i { width: 25px; height: 25px; border: 3px solid #bfc1c1; border-radius: 50%; background: linear-gradient(#f8f8f8, #eee); }
.pager .on { background: #bfd0f5; }
.pager .last { margin-left: 2px; background: linear-gradient(#fbf9f9, #f2eeee); }
.dock { position: absolute; left: 0; right: 0; bottom: 2px; height: 50px; padding: 0 61px 2px 62px; display: flex; align-items: center; justify-content: space-between; background: linear-gradient(90deg, #9fa7a8, #8f9ca1 42%, #76898e); }
.dock svg { width: 26px; height: 24px; }
.next-pane { position: relative; flex: none; width: 212px; background: #ededed; border-left: 1px solid #d0d0d0; overflow: hidden; }
.screen.next { left: 49px; top: 18px; box-shadow: none; }
.next p { left: 10px; top: 194px; font-size: 28px; line-height: 36px; }
.next .dock { bottom: 0; }
.knob { position: absolute; right: 4px; bottom: 54px; width: 25px; height: 25px; border: 3px solid #7b8c90; border-radius: 50%; background: #b8c9f2; }
.trash { position: absolute; right: 10px; bottom: 10px; width: 62px; height: 62px; display: flex; align-items: center; justify-content: center; border: 1px solid #c6c6c6; border-radius: 8px; background: rgba(125, 130, 130, .16); }
.trash svg { width: 24px; height: 30px; }

/* Downloads */
.downloads { flex: none; height: 48px; display: flex; align-items: center; padding: 0 13px 0 4px; }
.download { width: 227px; height: 37px; padding: 0 17px 0 16px; display: flex; align-items: center; gap: 13px; border-right: 1px solid #c4c4c4; }
.download .i16 { margin-bottom: 2px; }
.download span { flex: 1; padding-top: 6px; white-space: nowrap; }
.download button svg { width: 12px; height: 8px; color: #5a5a5a; }
.show-all { margin-left: auto; margin-right: 13px; width: 78px; height: 28px; border: 1px solid #777; border-radius: 3px; background: #fff; }

/* Taskbar */
.taskbar {
  flex: none;
  height: 40px;
  display: flex;
  align-items: stretch;
  gap: 4px;
  padding: 1px 0 0 8px;
  border-top: 1px solid #14223c;
  color: #fff;
  background:
    linear-gradient(rgba(255, 255, 255, .4), rgba(255, 255, 255, 0) 5px),
    linear-gradient(90deg, #1b3266, #1f4088 14%, #21428b 50%, #204089 80%, #16326a);
}
.start { width: 38px; margin-right: 10px; }
.start svg { width: 38px; height: 38px; }
.task {
  width: 58px;
  display: flex;
  align-items: center;
  justify-content: center;
  border: 1px solid #a9b6d3;
  border-radius: 3px;
  outline: 1px solid #142a5c;
  background: radial-gradient(circle at 0 0, rgba(255, 255, 255, .6), rgba(255, 255, 255, .08) 70%), #2f4c90;
}
.task svg { width: 32px; height: 32px; }
.stack { width: 51px; box-shadow: 3px 0 0 -1px #2f4c90, 4px 0 0 -1px #8d9dc4, 7px 0 0 -1px #2a478d; }
.plain { width: 64px; margin-right: 1px; padding-left: 6px; border-color: transparent; outline: 0; background: none; }
.lit { background: radial-gradient(circle at 0 0, #eef0f6, #a9b3d2 75%); }
.tray { margin-left: auto; display: flex; align-items: center; gap: 8px; }
.tray svg { width: 16px; height: 16px; }
.tray .arrow { width: 8px; height: 5px; margin: 0 4px 0 8px; }
.lang { padding-bottom: 6px; }
.clock { display: flex; flex-direction: column; align-items: center; margin-left: 10px; font-size: 11px; line-height: 17px; }
.desktop { align-self: stretch; width: 14px; margin-left: 4px; border: 1px solid #7f90b5; background: linear-gradient(160deg, #8391b3, #1d3568 45%); }
```
